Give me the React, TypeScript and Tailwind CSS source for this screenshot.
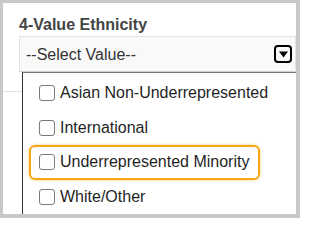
import React from "react";

const options = [
  "Asian Non-Underrepresented",
  "International",
  "Underrepresented Minority",
  "White/Other",
];

export default function App() {
  return (
    <div className="w-[300px] h-[218px] bg-[#c8c8c8] pt-[3px] pl-[3px] pr-[4px] pb-[4px]">
      <div className="relative w-full h-full bg-white overflow-hidden font-['Liberation_Sans',Arial,sans-serif]">
        <div className="pt-[12px] pl-[16px]">
          <div className="text-[16px] leading-[20px] font-bold text-[#444]">4-Value Ethnicity</div>
          <div className="mt-[1px] h-[36px] flex items-center justify-between bg-[#f9f9f9] border border-[#e4e4e4] border-b-[#cfcfcf] pl-[6px] pr-[3px]">
            <span className="text-[16px] text-[#333] translate-y-[0.5px]">--Select Value--</span>
            <span className="w-[18px] h-[18px] border-[2.5px] border-black rounded-[4px] flex items-center justify-center">
              <svg width="9" height="7" viewBox="0 0 9 7">
                <path d="M0 0.5 H9 L4.5 6.5 Z" fill="#000" />
              </svg>
            </span>
          </div>
        </div>
        <div className="h-[20px] border-b border-[#e2e2e2]" />
        <div className="absolute left-[19px] top-[69px] right-[-20px] bottom-[-20px] bg-white border-l border-t border-l-[#333] border-t-[#777] pt-[3px] pl-[6px]">
          {options.map((o, i) => (
            <div key={o} className="h-[34.5px] flex items-center">
              <div
                className={
                  i === 2
                    ? "h-full flex items-center gap-[5px] pl-[8px] pr-[9px] border-2 border-[#f3a712] rounded-[6px] shadow-[0_0_3px_rgba(243,167,18,0.6)]"
                    : "h-full flex items-center gap-[5px] pl-[8px] pr-[9px] border-2 border-transparent rounded-[6px]"
                }
              >
                <span className="w-[16px] h-[16px] border-[1.5px] border-[#7a7a7a] rounded-[3px] bg-white" />
                <span className="text-[16px] text-[#1f1f1f]">{o}</span>
              </div>
            </div>
          ))}
        </div>
      </div>
    </div>
  );
}
